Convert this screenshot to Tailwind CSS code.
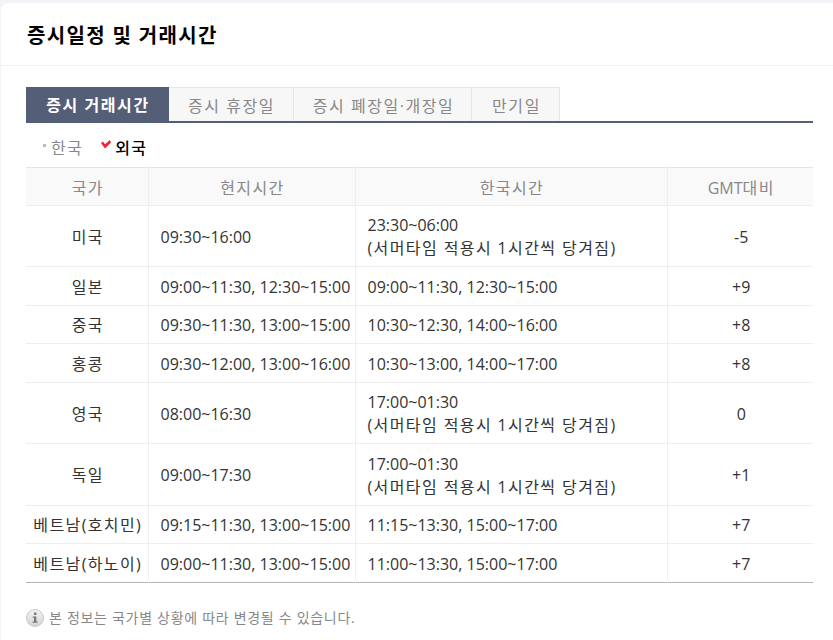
<!DOCTYPE html>
<html lang="ko">
<head>
    <meta charset="UTF-8">
    <meta name="viewport" content="width=device-width, initial-scale=1.0">
    <title>증시일정 및 거래시간</title>
    <script src="https://cdn.jsdelivr.net/npm/@tailwindcss/browser@4"></script>
</head>
<body class="bg-[#f3f4f7] overflow-hidden font-['Open_Sans','Noto_Sans_CJK_KR',sans-serif]">
    <div class="ml-[1px] mt-[3px] h-[637px] bg-white rounded-tl-[8px]">
        <!-- Title -->
        <div class="h-[63px] pl-[26px] pt-[3px] flex items-center border-b border-[#f0f1f3]">
            <h1 class="text-[20px] font-bold text-black tracking-[1.35px]">증시일정 및 거래시간</h1>
        </div>

        <div class="pl-[25px] w-[812px]">
            <!-- Tabs -->
            <div class="mt-[21px] flex h-[36px] border-b-2 border-[#555e77] text-[16px] tracking-[1.55px] text-[#888]">
                <div class="w-[143px] pt-[2px] pl-[1px] bg-[#555e77] text-white font-bold flex items-center justify-center">증시 거래시간</div>
                <div class="w-[125px] pt-[2px] pl-[1px] bg-[#f7f7f7] border-t border-r border-[#e6e6e6] flex items-center justify-center">증시 휴장일</div>
                <div class="w-[178px] pt-[2px] pl-[2px] bg-[#f7f7f7] border-t border-r border-[#e6e6e6] flex items-center justify-center">증시 폐장일·개장일</div>
                <div class="w-[88px] pt-[2px] pl-[2px] bg-[#f7f7f7] border-t border-r border-[#e6e6e6] flex items-center justify-center">만기일</div>
            </div>

            <!-- Korea / foreign -->
            <div class="h-[44px] pt-[5px] flex items-center text-[16px] tracking-[1.4px]">
                <span class="ml-[17px] w-[3px] h-[3px] bg-[#bbb] mb-[5px]"></span>
                <span class="ml-[5px] text-[#888]">한국</span>
                <svg class="ml-[18px] mb-[6px]" width="10" height="9" viewBox="0 0 10 9"><polygon points="0,3.2 2,1.6 4,4.2 8.8,0 10,2.4 4,8.6" fill="#e8283c"/></svg>
                <span class="ml-[4px] text-black font-medium">외국</span>
            </div>

            <!-- Table -->
            <table class="w-[787px] table-fixed border-collapse border-t border-b border-t-[#e4e4e4] border-b-[#b4b4b8] text-[16px] text-[#333] leading-[23px] [&_td]:pt-[2px] [&_th]:pt-[3px]">
                <colgroup>
                    <col class="w-[122px]">
                    <col class="w-[207px]">
                    <col class="w-[312px]">
                    <col class="w-[146px]">
                </colgroup>
                <thead>
                    <tr class="h-[38px] bg-[#f9f9f9] text-[#888]">
                        <th class="pl-[2px] font-normal tracking-[1.4px] border-b border-r border-[#eeeeee]">국가</th>
                        <th class="pl-[2px] font-normal tracking-[1.4px] border-b border-r border-[#eeeeee]">현지시간</th>
                        <th class="pl-[2px] font-normal tracking-[1.4px] border-b border-r border-[#eeeeee]">한국시간</th>
                        <th class="pl-[2px] font-normal border-b border-[#eeeeee]">GMT<span class="tracking-[1.4px]">대비</span></th>
                    </tr>
                </thead>
                <tbody>
                    <tr class="h-[61px]">
                        <td class="text-center pl-[2px] tracking-[1.4px] border-b border-r border-[#eeeeee]">미국</td>
                        <td class="pl-[12px] border-b border-r border-[#eeeeee]">09:30~16:00</td>
                        <td class="pl-[12px] border-b border-r border-[#eeeeee]">23:30~06:00<br><span class="tracking-[1.4px]">(서머타임 적용시 1시간씩 당겨짐)</span></td>
                        <td class="text-center pl-[2px] border-b border-[#eeeeee]">-5</td>
                    </tr>
                    <tr class="h-[39px]">
                        <td class="text-center pl-[2px] tracking-[1.4px] border-b border-r border-[#eeeeee]">일본</td>
                        <td class="pl-[12px] border-b border-r border-[#eeeeee]">09:00~11:30, 12:30~15:00</td>
                        <td class="pl-[12px] border-b border-r border-[#eeeeee]">09:00~11:30, 12:30~15:00</td>
                        <td class="text-center pl-[2px] border-b border-[#eeeeee]">+9</td>
                    </tr>
                    <tr class="h-[38px]">
                        <td class="text-center pl-[2px] tracking-[1.4px] border-b border-r border-[#eeeeee]">중국</td>
                        <td class="pl-[12px] border-b border-r border-[#eeeeee]">09:30~11:30, 13:00~15:00</td>
                        <td class="pl-[12px] border-b border-r border-[#eeeeee]">10:30~12:30, 14:00~16:00</td>
                        <td class="text-center pl-[2px] border-b border-[#eeeeee]">+8</td>
                    </tr>
                    <tr class="h-[39px]">
                        <td class="text-center pl-[2px] tracking-[1.4px] border-b border-r border-[#eeeeee]">홍콩</td>
                        <td class="pl-[12px] border-b border-r border-[#eeeeee]">09:30~12:00, 13:00~16:00</td>
                        <td class="pl-[12px] border-b border-r border-[#eeeeee]">10:30~13:00, 14:00~17:00</td>
                        <td class="text-center pl-[2px] border-b border-[#eeeeee]">+8</td>
                    </tr>
                    <tr class="h-[61px]">
                        <td class="text-center pl-[2px] tracking-[1.4px] border-b border-r border-[#eeeeee]">영국</td>
                        <td class="pl-[12px] border-b border-r border-[#eeeeee]">08:00~16:30</td>
                        <td class="pl-[12px] border-b border-r border-[#eeeeee]">17:00~01:30<br><span class="tracking-[1.4px]">(서머타임 적용시 1시간씩 당겨짐)</span></td>
                        <td class="text-center pl-[2px] border-b border-[#eeeeee]">0</td>
                    </tr>
                    <tr class="h-[62px]">
                        <td class="text-center pl-[2px] tracking-[1.4px] border-b border-r border-[#eeeeee]">독일</td>
                        <td class="pl-[12px] border-b border-r border-[#eeeeee]">09:00~17:30</td>
                        <td class="pl-[12px] border-b border-r border-[#eeeeee]">17:00~01:30<br><span class="tracking-[1.4px]">(서머타임 적용시 1시간씩 당겨짐)</span></td>
                        <td class="text-center pl-[2px] border-b border-[#eeeeee]">+1</td>
                    </tr>
                    <tr class="h-[38px]">
                        <td class="text-center pl-[2px] tracking-[1.4px] border-b border-r border-[#eeeeee]">베트남(호치민)</td>
                        <td class="pl-[12px] border-b border-r border-[#eeeeee]">09:15~11:30, 13:00~15:00</td>
                        <td class="pl-[12px] border-b border-r border-[#eeeeee]">11:15~13:30, 15:00~17:00</td>
                        <td class="text-center pl-[2px] border-b border-[#eeeeee]">+7</td>
                    </tr>
                    <tr class="h-[39px]">
                        <td class="text-center pl-[2px] tracking-[1.4px] border-r border-[#eeeeee]">베트남(하노이)</td>
                        <td class="pl-[12px] border-r border-[#eeeeee]">09:00~11:30, 13:00~15:00</td>
                        <td class="pl-[12px] border-r border-[#eeeeee]">11:00~13:30, 15:00~17:00</td>
                        <td class="text-center pl-[2px]">+7</td>
                    </tr>
                </tbody>
            </table>

            <!-- Note -->
            <div class="mt-[24px] flex items-center text-[14px] tracking-[0.7px] text-[#888]">
                <svg width="18" height="18" viewBox="0 0 18 18">
                    <defs>
                        <linearGradient id="infoBg" x1="0" y1="0" x2="0" y2="1">
                            <stop offset="0" stop-color="#f4f4f4"/>
                            <stop offset="1" stop-color="#d2d2d2"/>
                        </linearGradient>
                    </defs>
                    <circle cx="9" cy="9" r="8.5" fill="url(#infoBg)" stroke="#c8c8c8"/>
                    <rect x="8" y="3.5" width="2.4" height="2.4" fill="#777"/>
                    <path d="M6.8 7.5h3.5v5h1.2v1.2H6.6v-1.2h1.4V8.7H6.8z" fill="#777"/>
                </svg>
                <span class="ml-[5px]">본 정보는 국가별 상황에 따라 변경될 수 있습니다.</span>
            </div>
        </div>
    </div>
</body>
</html>
